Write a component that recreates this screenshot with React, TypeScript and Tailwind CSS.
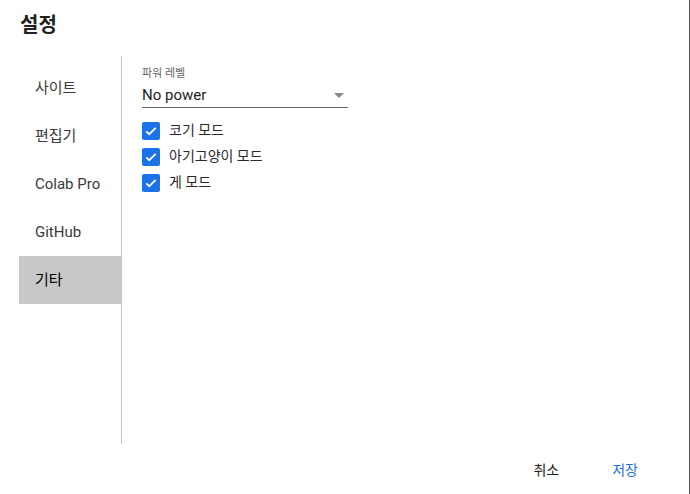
const items = ['사이트', '편집기', 'Colab Pro', 'GitHub', '기타']
const checks = ['코기 모드', '아기고양이 모드', '게 모드']

function Check() {
  return (
    <span className="w-[18px] h-[18px] rounded-[2px] bg-[#1a73e8] flex items-center justify-center shrink-0">
      <svg width="14" height="14" viewBox="0 0 24 24" fill="none" stroke="white" strokeWidth="3">
        <path d="M4 12.5l5 5L20 6.5" />
      </svg>
    </span>
  )
}

export default function App() {
  return (
    <div
      className="w-[690px] h-[494px] bg-white flex flex-col border-r border-[#555] text-[#212121]"
      style={{ fontFamily: 'Roboto, "Noto Sans CJK KR", sans-serif' }}
    >
      <h1 className="h-[56px] pl-[20px] pt-[11px] text-[20px] font-bold leading-[28px]">설정</h1>

      <div className="flex flex-1 pl-[19px]">
        <div className="w-[103px] border-r border-[#c4c4c4] pt-[8px] mb-[2px]">
          {items.map((it, i) => (
            <div
              key={it}
              className={
                'h-[48px] pl-[16px] flex items-center text-[15px] ' +
                (i === 4 ? 'bg-[#c8c8c8] text-black' : 'text-[#3a3a3a]')
              }
            >
              {it}
            </div>
          ))}
        </div>

        <div className="flex-1 pl-[20px] pt-[11px]">
          <div className="text-[11px] text-[#666] leading-[14px]">파워 레벨</div>
          <div className="w-[206px] h-[27px] border-b border-[#666] flex items-center justify-between pr-[4px] pt-[2px]">
            <span className="text-[15px] text-[#222]">No power</span>
            <span className="w-0 h-0 border-l-[5px] border-r-[5px] border-t-[5px] border-l-transparent border-r-transparent border-t-[#888]" />
          </div>
          <div className="mt-[13px] flex flex-col gap-[7px]">
            {checks.map((c) => (
              <label key={c} className="flex items-center gap-[9px] h-[19px] text-[14px] text-[#2a2a2a]">
                <Check />
                {c}
              </label>
            ))}
          </div>
        </div>
      </div>

      <div className="h-[48px] flex items-center justify-end pr-[51px] gap-[53px] text-[14px]">
        <span className="text-[#222]">취소</span>
        <span className="text-[#1a73e8]">저장</span>
      </div>
    </div>
  )
}
